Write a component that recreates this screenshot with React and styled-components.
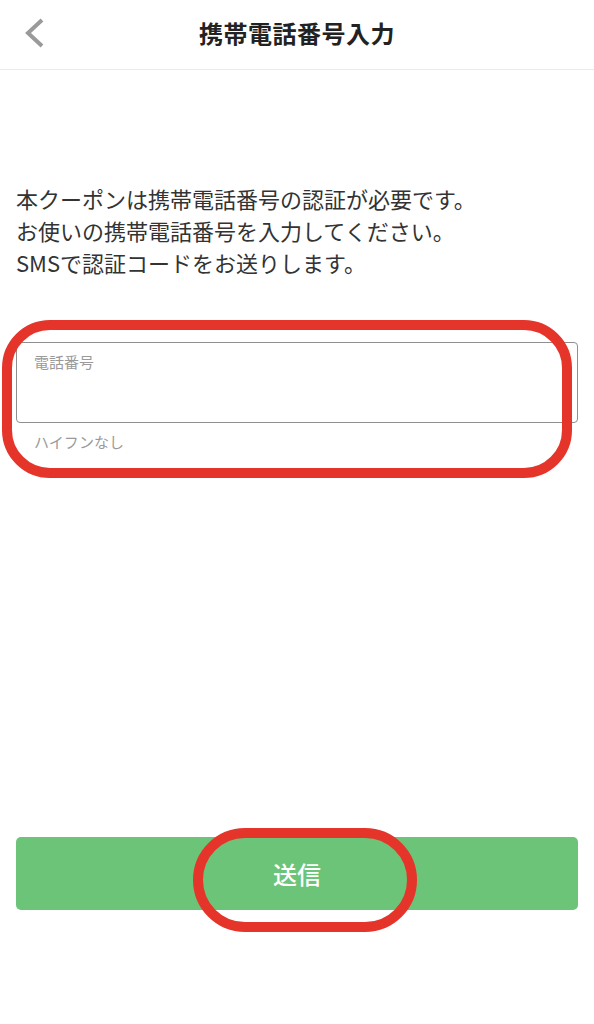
import React from 'react';
import styled, { createGlobalStyle } from 'styled-components';

const GlobalStyle = createGlobalStyle`
    html, body {
        margin: 0;
        padding: 0;
        background: #fff;
    }
    body {
        font-family: "Noto Sans CJK JP", "Noto Sans", sans-serif;
        color: #333;
    }
    * {
        box-sizing: border-box;
    }
`;

const Page = styled.div`
    width: 594px;
    min-height: 1024px;
    display: flex;
    flex-direction: column;
`;

const Header = styled.header`
    height: 70px;
    display: grid;
    grid-template-columns: 80px 1fr 80px;
    align-items: center;
    border-bottom: 1px solid #ebebeb;
`;

const BackButton = styled.button`
    border: none;
    background: none;
    padding: 0 0 4px 24px;
    display: flex;
    align-items: center;
    cursor: pointer;
`;

const Title = styled.h1`
    margin: 0 0 4px;
    text-align: center;
    font-size: 24px;
    font-weight: 700;
    color: #222;
    letter-spacing: 0.5px;
`;

const Content = styled.main`
    flex: 1;
    display: flex;
    flex-direction: column;
    padding: 112px 16px 0;
`;

const Lead = styled.p`
    margin: 0;
    font-size: 22px;
    line-height: 32px;
    color: #333;
`;

const Field = styled.div`
    position: relative;
    margin-top: 64px;
`;

const InputBox = styled.label`
    display: block;
    height: 81px;
    border: 1px solid #8f8f8f;
    border-radius: 4px;
    padding: 8px 17px 0;
`;

const FieldLabel = styled.span`
    display: block;
    font-size: 15px;
    line-height: 22px;
    color: #9a9a9a;
`;

const Hint = styled.p`
    margin: 8px 0 0;
    padding-left: 18px;
    font-size: 15px;
    line-height: 22px;
    color: #9a9a9a;
`;

const Marker = styled.span`
    position: absolute;
    pointer-events: none;
    border: 10px solid #e5352b;
    border-radius: ${p => p.$radius}px;
`;

const ButtonArea = styled.div`
    position: relative;
    margin-top: auto;
    margin-bottom: 114px;
`;

const SubmitButton = styled.button`
    width: 100%;
    height: 73px;
    border: none;
    border-radius: 5px;
    background: #6cc478;
    color: #fff;
    font-family: inherit;
    font-size: 24px;
    font-weight: 500;
    cursor: pointer;
`;

function App() {
    return (
        <>
            <GlobalStyle />
            <Page>
                <Header>
                    <BackButton aria-label="戻る">
                        <svg width="22" height="32" viewBox="0 0 22 32">
                            <polyline points="18,3 4,16 18,29" fill="none" stroke="#9a9a9a" strokeWidth="4" />
                        </svg>
                    </BackButton>
                    <Title>携帯電話番号入力</Title>
                    <div />
                </Header>
                <Content>
                    <Lead>
                        本クーポンは携帯電話番号の認証が必要です。<br />
                        お使いの携帯電話番号を入力してください。<br />
                        SMSで認証コードをお送りします。
                    </Lead>
                    <Field>
                        <InputBox>
                            <FieldLabel>電話番号</FieldLabel>
                        </InputBox>
                        <Hint>ハイフンなし</Hint>
                        <Marker $radius={48} style={{ left: -14, top: -22, width: 570, height: 158 }} />
                    </Field>
                    <ButtonArea>
                        <SubmitButton>送信</SubmitButton>
                        <Marker $radius={52} style={{ left: 177, top: -9, width: 224, height: 104 }} />
                    </ButtonArea>
                </Content>
            </Page>
        </>
    );
}

export default App;
